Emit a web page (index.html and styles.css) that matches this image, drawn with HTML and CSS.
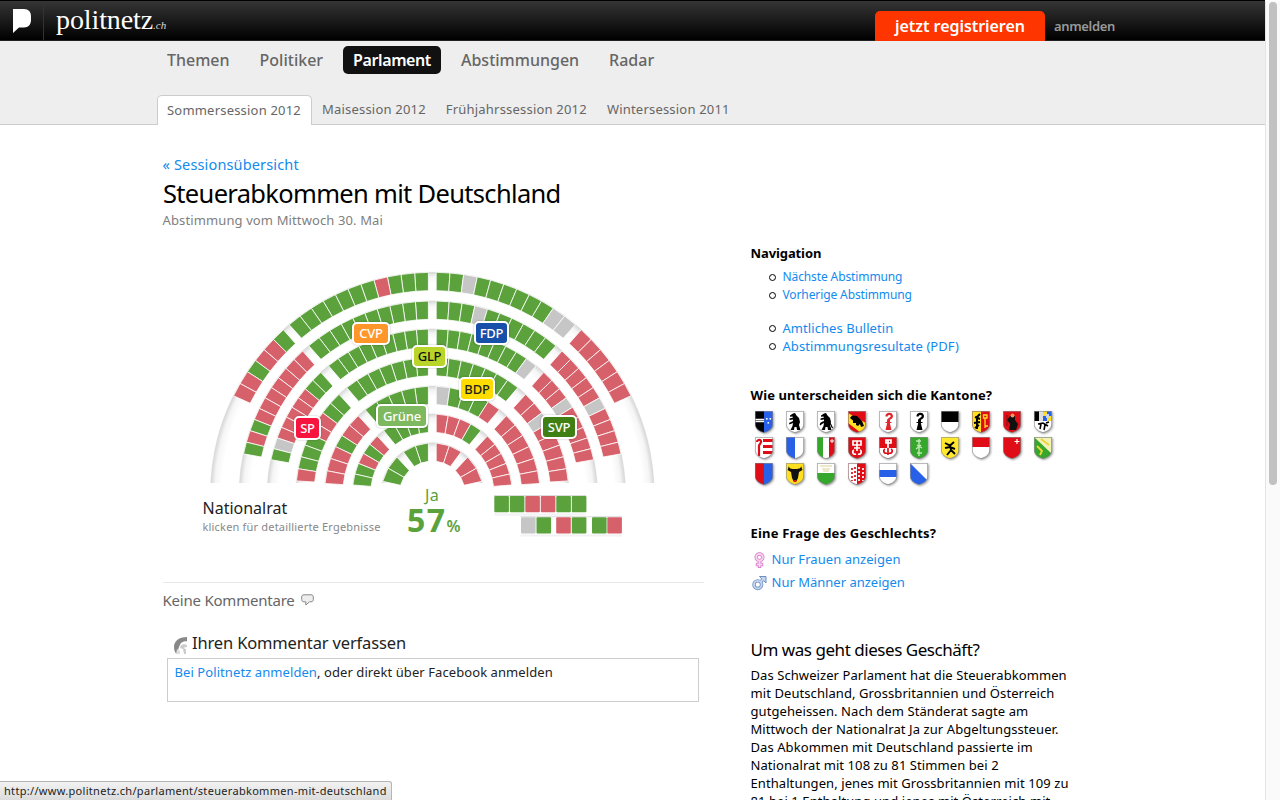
FILE: index.html
```html
<!DOCTYPE html>
<html lang="de">
<head>
<meta charset="utf-8">
<title>Steuerabkommen mit Deutschland – politnetz.ch</title>
<link rel="stylesheet" href="styles.css">
</head>
<body>
<div class="page">
  <header class="topbar">
    <a class="brand-mark"><svg width="18" height="24" viewBox="0 0 18 24"><path d="M0 0H11C15.500 0 18 3 18 7V11C18 15.500 15.500 18.500 11 18.500H6L0 24Z" fill="#fff"/></svg></a>
    <a class="brand"><span class="brand-name">politnetz</span><span class="brand-tld">.ch</span></a>
    <div class="account"><a class="register">jetzt registrieren</a><a class="login">anmelden</a></div>
  </header>
  <div class="menus">
    <nav class="nav">
      <a>Themen</a><a>Politiker</a><a class="current">Parlament</a><a>Abstimmungen</a><a>Radar</a>
    </nav>
    <nav class="tabs">
      <a class="active">Sommersession 2012</a><a>Maisession 2012</a><a>Frühjahrssession 2012</a><a>Wintersession 2011</a>
    </nav>
  </div>
  <div class="columns">
    <main class="main">
      <a class="back">« Sessionsübersicht</a>
      <h1>Steuerabkommen mit Deutschland</h1>
      <p class="date">Abstimmung vom Mittwoch 30. Mai</p>
      <div class="chart">
        <svg id="hall" class="hall" viewBox="163 262 541 226"></svg>
        <span class="party cvp">CVP</span>
        <span class="party fdp">FDP</span>
        <span class="party glp">GLP</span>
        <span class="party bdp">BDP</span>
        <span class="party gruene">Grüne</span>
        <span class="party sp">SP</span>
        <span class="party svp">SVP</span>
      </div>
      <div class="result">
        <div class="chamber"><strong>Nationalrat</strong><span>klicken für detaillierte Ergebnisse</span></div>
        <div class="score"><span class="ja">Ja</span><span class="pct">57<small>%</small></span></div>
        <svg id="bench" class="bench" viewBox="494 488 132 54"></svg>
      </div>
      <section class="comments">
        <div class="count">Keine Kommentare
          <svg width="13" height="12" viewBox="0 0 13 12"><path d="M3 .8H10C11.600 .8 12.300 1.800 12.300 3V5.500C12.300 7 11.500 7.800 10 7.800H8.500L4.800 11V7.800H3C1.400 7.800 .7 7 .7 5.500V3C.7 1.800 1.400 .8 3 .8Z" fill="#eee" stroke="#888"/></svg>
        </div>
        <h2><svg width="13" height="17" viewBox="0 0 13 17"><path d="M13 0C5 0 0 4 0 10C0 13 1 15.500 2.500 17H4C3.500 13 5 9 7 6C9 4.500 11 4 13 4.500Z" fill="#888"/><path d="M6.500 9C8 7 11 7 13 8V10L10 10.500L11 12H12V17H10L9 12L6 11Z" fill="#ccc"/><path d="M3 12L6 14V17H2Z" fill="#ddd"/></svg>Ihren Kommentar verfassen</h2>
        <div class="box"><a>Bei Politnetz anmelden</a>, oder direkt über Facebook anmelden</div>
      </section>
    </main>
    <aside class="side">
      <h3>Navigation</h3>
      <ul class="small"><li><a>Nächste Abstimmung</a></li><li><a>Vorherige Abstimmung</a></li></ul>
      <ul><li><a>Amtliches Bulletin</a></li><li><a>Abstimmungsresultate (PDF)</a></li></ul>
      <h3 class="q-cantons">Wie unterscheiden sich die Kantone?</h3>
      <div id="cantons" class="cantons"></div>
      <h3 class="q-gender">Eine Frage des Geschlechts?</h3>
      <a class="gender"><svg width="15" height="16" viewBox="0 0 15 16"><g fill="none" stroke="#d874c4" stroke-width="3.400"><circle cx="7.500" cy="5.300" r="3.300"/><path d="M7.500 9V16M3.800 12.500H11.200"/></g><g fill="none" stroke="#f6d3f0" stroke-width="1.900"><circle cx="7.500" cy="5.300" r="3.300"/><path d="M7.500 9V15.200M4.500 12.500H10.500"/></g></svg><span>Nur Frauen anzeigen</span></a>
      <a class="gender men"><svg width="15" height="16" viewBox="0 0 15 16"><g fill="none" stroke="#6f8fc2" stroke-width="3.400"><circle cx="5.800" cy="9.700" r="3.800"/><path d="M8.500 7L12 3.500"/></g><path d="M7.500 1.500H14V8L11.800 5.800L9.700 3.800Z" fill="#c4d5ee" stroke="#6f8fc2"/><g fill="none" stroke="#c4d5ee" stroke-width="1.900"><circle cx="5.800" cy="9.700" r="3.800"/><path d="M8.500 7L12 3.500"/></g></svg><span>Nur Männer anzeigen</span></a>
      <h2>Um was geht dieses Geschäft?</h2>
      <p>Das Schweizer Parlament hat die Steuerabkommen<br>mit Deutschland, Grossbritannien und Österreich<br>gutgeheissen. Nach dem Ständerat sagte am<br>Mittwoch der Nationalrat Ja zur Abgeltungssteuer.<br>Das Abkommen mit Deutschland passierte im<br>Nationalrat mit 108 zu 81 Stimmen bei 2<br>Enthaltungen, jenes mit Grossbritannien mit 109 zu<br>81 bei 1 Enthaltung und jenes mit Österreich mit</p>
    </aside>
  </div>
</div>
<div class="scrollbar"><div class="thumb"></div></div>
<div class="status">http://www.politnetz.ch/parlament/steuerabkommen-mit-deutschland</div>
<script src="chart.js"></script>
</body>
</html>
```

FILE: styles.css
```css
*, *::before { box-sizing: border-box; }
body {
  margin: 0;
  height: 800px;
  overflow: hidden;
  position: relative;
  background: #fff;
  color: #000;
  font: 13px/18px "Noto Sans", "Open Sans", sans-serif;
}
h1, h2, h3, p, ul { margin: 0; padding: 0; font-weight: 400; }
a { color: #128aee; text-decoration: none; white-space: nowrap; }
svg { display: block; flex: none; }

.page { width: 1265px; height: 800px; overflow: hidden; }
.topbar {
  height: 41px;
  display: flex;
  border-top: 1px solid #000;
  border-bottom: 1px solid #222;
  background: linear-gradient(#353535, #000);
}
.brand-mark { width: 44px; padding: 8px 0 0 13px; border-right: 1px solid #333; }
.brand {
  width: 831px;
  padding-left: 12px;
  color: #fff;
  font-family: "Liberation Serif", serif;
  line-height: 37px;
}
.brand-name { font-size: 28px; letter-spacing: -.1px; }
.brand-tld { font-size: 11px; font-style: italic; color: #ddd; }
.account { display: flex; font-weight: 600; }
.register {
  width: 170px;
  height: 30px;
  margin-top: 10px;
  border-radius: 5px 5px 0 0;
  background: #ff3500;
  color: #fff;
  font-size: 16px;
  line-height: 30px;
  text-align: center;
  letter-spacing: -.05px;
}
.login { margin: 10px 0 0 9px; color: #999; font-size: 13px; line-height: 30px; letter-spacing: -.35px; }

.menus { height: 84px; padding-left: 157px; background: #eee; border-bottom: 1px solid #ccc; }
.nav { display: flex; gap: 10px; padding-top: 5px; height: 54px; }
.nav a {
  height: 28px;
  padding: 0 10px;
  border-radius: 5px;
  color: #666;
  font-size: 16px;
  font-weight: 500;
  line-height: 28px;
}
.nav .current { background: #111; color: #fff; font-weight: 600; letter-spacing: -.4px; }
.tabs { display: flex; }
.tabs a { height: 30px; padding: 0 10px; color: #666; line-height: 28px; letter-spacing: .2px; }
.tabs .active {
  width: 155px;
  border: 1px solid #ccc;
  border-bottom: 0;
  border-radius: 5px 5px 0 0;
  padding: 0 9px;
  background: #fff;
}

.columns { display: flex; padding-left: 163px; }
.main { width: 541px; margin-right: 46.500px; padding-top: 29px; }
.back { display: block; font-size: 14.5px; line-height: 20px; letter-spacing: .15px; margin-left: -.5px; }
h1 { padding-top: 1px; font-size: 25.5px; line-height: 36px; letter-spacing: -.68px; white-space: nowrap; }
.date { color: #808080; line-height: 18px; letter-spacing: .12px; margin-left: -.5px; }
.chart { position: relative; height: 226px; margin-top: 33px; }
.hall { width: 541px; height: 226px; }
.party {
  position: absolute;
  display: block;
  border: 2px solid #fff;
  border-radius: 5px;
  box-shadow: 0 0 2px rgba(0, 0, 0, .3);
  color: #fff;
  font-size: 13px;
  font-weight: 500;
  line-height: 19px;
  height: 23px;
  text-align: center;
  letter-spacing: -.2px;
}
.cvp { left: 189px; top: 60px; width: 38px; background: #ff962a; }
.fdp { left: 311px; top: 59px; width: 35px; height: 24px; line-height: 20px; background: #1750a8; }
.glp { left: 249px; top: 83px; width: 35px; background: #b9d52a; color: #111; }
.bdp { left: 296px; top: 115px; width: 36px; height: 24px; line-height: 20px; background: #ffdc00; color: #222; }
.gruene { left: 213px; top: 142px; width: 52px; height: 24px; line-height: 20px; background: #7fb95f; letter-spacing: -.1px; }
.sp { left: 131px; top: 154px; width: 27px; height: 24px; line-height: 20px; background: #f7143f; }
.svp { left: 378px; top: 153px; width: 36px; height: 24px; line-height: 20px; background: #407f14; }

.result { display: flex; height: 94px; padding-left: 39.500px; }
.chamber { width: 204.500px; padding-top: 10px; }
.chamber strong { display: block; font-size: 16px; font-weight: 400; line-height: 20px; color: #222; }
.chamber span { display: block; font-size: 11px; line-height: 18px; color: #888; letter-spacing: .19px; white-space: nowrap; }
.score { width: 87px; color: #5ba13c; white-space: nowrap; }
.ja { display: block; padding-left: 18px; font-size: 16px; line-height: 14px; letter-spacing: .5px; }
.pct { display: block; font-size: 32px; font-weight: 700; line-height: 36px; letter-spacing: 1.4px; }
.pct small { font-size: 16px; font-weight: 600; letter-spacing: 0; }
.bench { width: 132px; height: 54px; }

.comments { border-top: 1px solid #e8e8e8; padding-top: 7px; }
.count { display: flex; align-items: center; gap: 6px; font-size: 15px; line-height: 20px; color: #666; letter-spacing: -.22px; margin-left: -.5px; }
.comments h2 { display: flex; align-items: center; gap: 5px; margin: 21px 0 0 11px; font-size: 16.5px; line-height: 24px; color: #222; letter-spacing: -.15px; }
.comments h2 svg { margin-top: 4px; }
.box { width: 532px; height: 44px; margin: 3px 0 0 4px; padding: 4px 6.500px; border: 1px solid #ccc; color: #222; letter-spacing: .08px; }

.side { width: 340px; padding-top: 119px; }
h3 { font-size: 13px; font-weight: 700; line-height: 18px; letter-spacing: -.1px; }
ul { list-style: none; padding-left: 32px; margin-bottom: 15px; letter-spacing: .06px; }
ul.small { font-size: 12px; margin-top: 6px; letter-spacing: -.11px; }
li { position: relative; height: 18px; line-height: 18px; }
li::before { content: ""; position: absolute; left: -14px; top: 6px; width: 7px; height: 7px; border: 1.500px solid #000; border-radius: 50%; }
.q-cantons { margin-top: 31px; letter-spacing: .1px; }
.cantons { display: grid; grid-template-columns: repeat(10, 31px); grid-auto-rows: 26px; padding: 7px 0 0 4px; height: 85px; }
.cantons svg { filter: drop-shadow(1px 1px 1px rgba(0, 0, 0, .4)); }
.q-gender { margin-top: 35px; letter-spacing: .19px; }
.gender { display: flex; align-items: center; gap: 5px; height: 23px; margin-top: 5px; padding-left: 1px; letter-spacing: .05px; }
.gender svg { margin-top: 2px; }
.men { margin-top: 0; letter-spacing: 0; }
.side h2 { margin-top: 44px; font-size: 17px; line-height: 26px; letter-spacing: -.46px; }
.side p { margin-top: 3px; white-space: nowrap; letter-spacing: .08px; }

.scrollbar { position: absolute; top: 1px; right: 0; width: 15px; height: 799px; border-left: 1px solid #e4e4e4; background: #fafafa; }
.thumb { width: 8px; height: 483px; margin: 1px 0 0 3px; border-radius: 4px; background: #c1c1c1; }
.status {
  position: absolute;
  left: 0;
  bottom: 0;
  width: 392px;
  height: 19px;
  padding-left: 4px;
  border: 1px solid #b5b5b5;
  border-width: 1px 1px 0 0;
  border-radius: 0 3px 0 0;
  background: linear-gradient(#f2f2f2, #dcdcdc);
  color: #222;
  font-size: 11px;
  line-height: 18px;
  letter-spacing: .31px;
  white-space: nowrap;
}
```

FILE: chart.js
```js
const GREEN = "#5ba13c", RED = "#d7616a", GREY = "#c6c6c6";
const fill = { G: GREEN, R: RED, x: GREY };
const CX = 432.3, CY = 494;

// Seat rows from the outside in: radius, votes per sector, sector edges in degrees.
const rows = [
  { r: 221.7, lo: "GRRGRR", li: "GGGRGGGGGGG", ri: "GGxGGGGGGxx", ro: "RRRRRR", hi: 49.8, top: 47.8, low: 26.3 },
  { r: 193, lo: "RRRRRRRGRG", li: "GGGGGGGGGG", ri: "GGGxGGGGGG", ro: "RRRRRxRRRR", hi: 50.2, top: 47.8, low: 12 },
  { r: 165, lo: "GGRRRRRxG", li: "GGGGGGGGG", ri: "GGGGGGGGx", ro: "RRRxRRRRR", hi: 51, top: 47.5, low: 12 },
  { r: 136.5, lo: "GGRRGGGR", li: "GGGGGGG", ri: "GGGGGGG", ro: "RRxRRRRR", hi: 51.2, top: 46.9, low: 5.5 },
  { r: 107.8, lo: "RRGRRR", li: "GGGGG", ri: "xGGGR", ro: "RRRRRR", hi: 51.5, top: 46.6, low: 5.6 },
  { r: 80, lo: "RGRGG", li: "GGGG", ri: "RRRG", ro: "RRRRR", hi: 52.5, top: 46.5, low: 6.5 },
  { r: 51.2, lo: "GG", li: "GG", ri: "RR", ro: "RR", hi: 55.5, top: 46.2, low: 14.3 }
];

const THICK = 18.3;
const rad = d => d * Math.PI / 180;
const pt = (r, deg, side) => (CX + side * r * Math.cos(rad(deg))).toFixed(2) + "," + (CY - r * Math.sin(rad(deg))).toFixed(2);

// Gaps between sectors keep a constant width, so inner corners use their own angle.
function sector(row, votes, from, to, side, shiftFrom, shiftTo) {
  const ri = row.r - THICK, n = votes.length, k = row.r / ri - 1;
  const f2 = from + shiftFrom * k, t2 = to + shiftTo * k;
  return [...votes].map((v, i) => {
    const a = from + (to - from) * i / n, b = from + (to - from) * (i + 1) / n;
    const c = f2 + (t2 - f2) * i / n, d = f2 + (t2 - f2) * (i + 1) / n;
    return `<polygon points="${pt(row.r, a, side)} ${pt(row.r, b, side)} ${pt(ri, d, side)} ${pt(ri, c, side)}" fill="${fill[v]}" stroke="#fff" stroke-width=".8"/>`;
  }).join("");
}

let defs = '<clipPath id="floor"><rect x="163" y="262" width="541" height="221"/></clipPath>';
let rings = "", seats = "";
rows.forEach((row, i) => {
  const R = row.r + .6;
  defs += `<radialGradient id="g${i}" gradientUnits="userSpaceOnUse" cx="${CX}" cy="${CY}" r="${R}">
    <stop offset="${(R - 12) / R}" stop-color="#fff"/><stop offset="${(R - 5) / R}" stop-color="#f5f5f5"/><stop offset="${(R - 1) / R}" stop-color="#dadada"/><stop offset="1" stop-color="#e6e6e6"/></radialGradient>`;
  rings += `<circle cx="${CX}" cy="${CY}" r="${R}" fill="url(#g${i})"/>`;
  const gap = Math.asin(3.9 / row.r) * 180 / Math.PI;
  seats += sector(row, row.li, 90 - gap, row.hi, -1, -gap, 2) + sector(row, row.ri, 90 - gap, row.hi, 1, -gap, 2);
  seats += sector(row, row.lo, row.top, row.low, -1, -1, 2) + sector(row, row.ro, row.top, row.low, 1, -1, 2);
});
document.getElementById("hall").innerHTML = `<defs>${defs}</defs><g clip-path="url(#floor)">${rings}</g>${seats}`;

const seat = (x, y, v) => `<rect x="${x}" y="${y}" width="14.600" height="16.300" rx="1" fill="${fill[v]}"/>`;
let bench = '<path d="M494 514.500H586M520.500 535.500H622" stroke="#f2f2f2" stroke-width="2"/><path d="M494 495.500H586M520.500 516.700H622" stroke="#ddd"/>';
[..."GGRRGG"].forEach((v, i) => { bench += seat(494.300 + i * 15.500, 496, v); });
[[521, "x"], [536.500, "G"], [556.200, "R"], [571.800, "G"], [592, "G"], [607.300, "R"]].forEach(([x, v]) => { bench += seat(x, 517.200, v); });
document.getElementById("bench").innerHTML = bench;

// Cantonal coats of arms, drawn on an 18 by 22 shield.
const all = c => `<rect width="18" height="22" fill="${c}"/>`;
const box = (x, y, w, h, c) => `<rect x="${x}" y="${y}" width="${w}" height="${h}" fill="${c}"/>`;
const line = (d, c, w) => `<path d="${d}" fill="none" stroke="${c}" stroke-width="${w}"/>`;
const dash = (d, c) => `<path d="${d}" fill="none" stroke="${c}" stroke-width="1.700" stroke-dasharray="2 2"/>`;
const B = "#2860e8", K = "#000", W = "#fff", R = "#e00d16", Y = "#ffdf1f", V = "#35a72c";
const bear = '<path d="M4 4.500L7 2.500L9 2L10.500 4.500L13 7L14 11L13 14L14.500 19H11L10.500 16L8.500 16L8 19H4.500L6.500 15L7 12L3.500 13.500L3 12L7 10V8.500L3.500 9L3.500 7.500L7 6.500L6.500 5.500L4 5.800Z" fill="#000"/>';
const crook = c => line("M9.500 12V9C9.500 7.500 13.500 7.500 12.800 4.500C12 2 7.500 2.500 7.500 5.500", c, 2.200) + `<path d="M8 8.500H11L10.800 12L12.500 19H6.500L8.200 12Z" fill="${c}"/>` + line("M6.500 11.500H12.500", c, 1.200);
const keys = c => line("M5 4H13V8H5ZM9 4V14M6 13A2 2 0 1 0 8 17M12 13A2 2 0 1 1 10 17M6 11H12", c, 1.700);
const arms = [
  all(B) + box(0, 0, 9, 22, K) + line("M0 8.500H9M0 10.500H9", W, 1.600) + box(11, 7, 1.600, 1.600, W) + box(14.500, 7, 1.600, 1.600, W) + box(12.500, 11, 1.600, 1.600, W),
  all(W) + bear,
  all(W) + bear + line("M3 14L6 11M15.500 17L13 12", K, 1.200),
  all(R) + `<path d="M0 2L18 12V22H13L0 12Z" fill="${Y}"/><path d="M2 7L4 4.500L9 5L14 10L16 15L13 16L12 13L10 15L8 14L8 12L5 12L5 9.500Z" fill="#000"/>`,
  all(W) + crook("#e2252b"),
  all(W) + crook(K),
  all(W) + box(0, 0, 18, 11, K),
  all(R) + box(0, 0, 9, 22, Y) + line("M8 3L5 6V18M8 8L3 6M8 11L2 12M7 14L3 17", K, 2) + line("M13 7V17M11.500 4H15V7H11.500ZM13 15H16", Y, 1.300),
  all(R) + '<path d="M7 5H12V9L15 13L13 19H6L7 13L4 9Z" fill="#111"/><circle cx="9.500" cy="4.500" r="2" fill="#eb9b62"/>' + line("M4 4V15", "#7b1216", 1),
  all(W) + box(0, 0, 5, 10, K) + box(5, 0, 4, 10, "#ddd") + box(9, 0, 9, 10, B) + box(9, 0, 4, 5, Y) + box(13, 5, 5, 5, Y) + box(12, 3, 3, 4, "#c9d4e8") + line("M4 13L9 12L14 15M7 13L6 18M11 14L10 19M12 12L15 11", K, 1.600),
  all(W) + box(8, 2, 10, 3, R) + box(8, 8, 10, 3, R) + box(8, 14, 10, 3, R) + line("M4 19V9C4 7 7 6 6 4C5 2 2 3 2 5", R, 2.200),
  all(W) + box(0, 0, 9, 22, B),
  all(W) + box(0, 0, 6, 22, V) + box(12, 0, 6, 22, R) + line("M15 2V6M13 4H17", W, 1),
  all(R) + keys(W),
  all(R) + box(0, 11, 18, 11, W) + line("M7 3H12V6H7ZM9 3V11", W, 1.700) + line("M9 11V18M6 12A2 2 0 1 0 8 16M12 12A2 2 0 1 1 10 16", R, 1.700),
  all(V) + line("M9 2V19M6 4H11M7 8L12 11M11 8L6 12M7 16H12", "#bfe8b4", 1.400),
  all("#ffe82b") + line("M4 6L9 8.500L13 5M4 11L9 10L14 12M9 8L10 13L6 18M10 13L14 17", K, 1.900),
  all(W) + box(0, 0, 18, 10, R),
  all(R) + line("M14 2V7M11.500 4.500H16.500", W, 1.200),
  all(V) + '<path d="M0 0H18V17Z" fill="#f3f1b5"/>' + line("M3 9L8 14L6 18M7 2L11 5L15 8", "#ead637", 1.900),
  all(B) + box(0, 0, 9, 22, R),
  all(Y) + '<path d="M3 3C3 6 6 6 9 6C12 6 15 6 15 3L16.500 7L13 9L12 15L10.500 18H7.500L6 15L5 9L1.500 7Z" fill="#111"/>' + box(7.500, 17, 3, 2, R),
  all(W) + box(0, 10, 18, 12, V) + line("M3 3H15M5 6H13M6 8H12", "#d9c98d", .9),
  all(R) + box(0, 0, 9, 22, W) + dash("M4 5V18M7 4V18", R) + dash("M11 4V18M15 5V18", W),
  all(W) + box(0, 7, 18, 7, B),
  all(W) + `<path d="M0 0L18 18V22H0Z" fill="${B}"/>`
];
const shape = "M.3 .3H17.700V13C17.700 18 13 20.500 9 21.600C5 20.500 .3 18 .3 13Z";
document.getElementById("cantons").innerHTML =
  `<svg width="0" height="0" style="position:absolute"><clipPath id="shield"><path d="${shape}"/></clipPath></svg>` +
  arms.map(a => `<svg width="18" height="22" viewBox="0 0 18 22"><g clip-path="url(#shield)">${a}</g><path d="${shape}" fill="none" stroke="#777" stroke-width=".6"/></svg>`).join("");
```
